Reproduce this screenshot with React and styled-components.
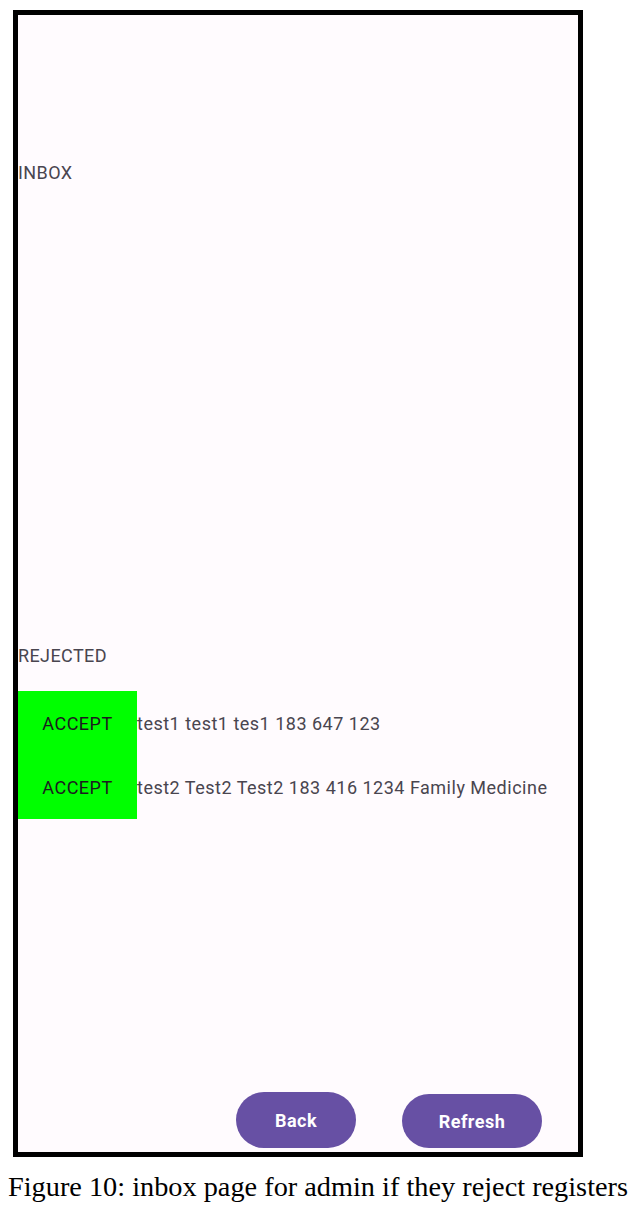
import React from "react";
import styled, { createGlobalStyle } from "styled-components";

const GlobalStyle = createGlobalStyle`
  html, body {
    margin: 0;
    padding: 0;
    background: #ffffff;
  }
  * {
    box-sizing: border-box;
  }
`;

const Page = styled.div`
  width: 639px;
  height: 1218px;
  padding: 10px 0 0 13px;
  display: flex;
  flex-direction: column;
`;

const PhoneFrame = styled.div`
  width: 570px;
  height: 1147px;
  border: 5px solid #000;
  background: #fffbfe;
  display: flex;
  flex-direction: column;
  padding: 148px 0 4px 0;
  font-family: Roboto, "Noto Sans", sans-serif;
`;

const SectionLabel = styled.div`
  font-size: 18px;
  line-height: 20px;
  letter-spacing: 0.4px;
  color: #49454f;
  margin-bottom: ${(p) => p.gap}px;
`;

const RequestList = styled.div`
  display: flex;
  flex-direction: column;
`;

const RequestRow = styled.div`
  display: flex;
  align-items: center;
  height: 64px;
`;

const AcceptButton = styled.button`
  width: 119px;
  height: 64px;
  border: none;
  border-radius: 0;
  background: #00ff00;
  color: #1c1b1f;
  font-family: Roboto, "Noto Sans", sans-serif;
  font-size: 18px;
  letter-spacing: 0.5px;
  padding: 0;
  display: flex;
  align-items: center;
  justify-content: center;
`;

const RequestText = styled.span`
  font-size: 18px;
  letter-spacing: 0.5px;
  color: #49454f;
  white-space: nowrap;
`;

const Spacer = styled.div`
  flex: 1;
`;

const Footer = styled.div`
  display: flex;
  justify-content: flex-end;
  align-items: flex-end;
  gap: 46px;
  padding-right: 36px;
`;

const PillButton = styled.button`
  width: ${(p) => p.w}px;
  height: ${(p) => p.h}px;
  border: none;
  border-radius: 28px;
  background: #6750a4;
  color: #ffffff;
  font-family: Roboto, "Noto Sans", sans-serif;
  font-weight: 700;
  font-size: 18px;
  letter-spacing: 0.5px;
  display: flex;
  align-items: center;
  justify-content: center;
  padding: 0;
`;

const Caption = styled.div`
  font-family: "Liberation Serif", "Times New Roman", serif;
  font-size: 28.3px;
  line-height: 32px;
  color: #000;
  margin: 14px 0 0 -5px;
  white-space: nowrap;
`;

const rejected = [
  "test1 test1 tes1 183 647 123",
  "test2 Test2 Test2 183 416 1234 Family Medicine",
];

export default function App() {
  return (
    <>
      <GlobalStyle />
      <Page>
        <PhoneFrame>
          <SectionLabel gap={463}>INBOX</SectionLabel>
          <SectionLabel gap={25}>REJECTED</SectionLabel>
          <RequestList>
            {rejected.map((r) => (
              <RequestRow key={r}>
                <AcceptButton>ACCEPT</AcceptButton>
                <RequestText>{r}</RequestText>
              </RequestRow>
            ))}
          </RequestList>
          <Spacer />
          <Footer>
            <PillButton w={120} h={56}>Back</PillButton>
            <PillButton w={140} h={54}>Refresh</PillButton>
          </Footer>
        </PhoneFrame>
        <Caption>Figure 10: inbox page for admin if they reject registers</Caption>
      </Page>
    </>
  );
}
